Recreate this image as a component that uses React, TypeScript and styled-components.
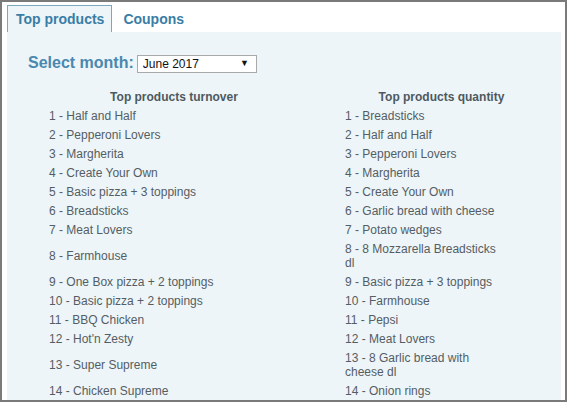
import styled, { createGlobalStyle } from "styled-components";

const GlobalStyle = createGlobalStyle`
  html, body {
    margin: 0;
    padding: 0;
    background: #ffffff;
  }
  body {
    font-family: "Liberation Sans", Arial, sans-serif;
  }
`;

const Frame = styled.div`
  width: 567px;
  height: 402px;
  box-sizing: border-box;
  border: 2px solid #7a7a7a;
  background: #ffffff;
  padding: 3px 4px 0 5px;
  display: flex;
  flex-direction: column;
  overflow: hidden;
`;

const TabBar = styled.div`
  display: flex;
  align-items: flex-end;
`;

const Tab = styled.div<{ $active?: boolean }>`
  height: 27px;
  box-sizing: border-box;
  padding: 0 7px 0 8px;
  display: flex;
  align-items: center;
  font-size: 14px;
  font-weight: bold;
  color: #3a7da6;
  background: ${(p) => (p.$active ? "#edf5f8" : "transparent")};
  border: 1px solid ${(p) => (p.$active ? "#7ba7bf" : "transparent")};
  border-bottom: none;
  margin-right: 2px;
`;

const Panel = styled.div`
  flex: 1;
  background: #edf5f8;
  padding: 22px 0 0 21px;
`;

const MonthRow = styled.div`
  display: flex;
  align-items: center;
  gap: 3px;
  height: 18px;
`;

const MonthLabel = styled.label`
  font-size: 16px;
  font-weight: bold;
  color: #4a88af;
  line-height: 18px;
`;

const SelectWrap = styled.div`
  position: relative;
  width: 120px;
  height: 18px;
`;

const MonthSelect = styled.select`
  appearance: none;
  width: 100%;
  height: 100%;
  box-sizing: border-box;
  border: 1px solid #a9a9a9;
  border-radius: 0;
  background: #ffffff;
  padding: 0 0 0 5px;
  font-family: "Liberation Sans", Arial, sans-serif;
  font-size: 12px;
  color: #111111;
  outline: none;
`;

const Arrow = styled.span`
  position: absolute;
  right: 8px;
  top: 4px;
  font-size: 9px;
  line-height: 10px;
  color: #111111;
  pointer-events: none;
`;

const Ranking = styled.div`
  display: grid;
  grid-template-columns: 296px 1fr;
  align-items: center;
  margin: 15px 0 0 -2px;
`;

const Heading = styled.div`
  text-align: center;
  font-size: 12px;
  font-weight: bold;
  color: #4d5960;
  line-height: 14px;
  padding: 2.5px 0;
`;

const Item = styled.div<{ $wrap?: number }>`
  padding: 2.5px 0 2.5px 23px;
  font-size: 12px;
  line-height: 14px;
  color: #555d64;
  span {
    display: block;
    max-width: ${(p) => (p.$wrap ? `${p.$wrap}px` : "none")};
  }
`;

const turnover = [
  "Half and Half",
  "Pepperoni Lovers",
  "Margherita",
  "Create Your Own",
  "Basic pizza + 3 toppings",
  "Breadsticks",
  "Meat Lovers",
  "Farmhouse",
  "One Box pizza + 2 toppings",
  "Basic pizza + 2 toppings",
  "BBQ Chicken",
  "Hot'n Zesty",
  "Super Supreme",
  "Chicken Supreme",
];

const quantity = [
  "Breadsticks",
  "Half and Half",
  "Pepperoni Lovers",
  "Margherita",
  "Create Your Own",
  "Garlic bread with cheese",
  "Potato wedges",
  "8 Mozzarella Breadsticks dl",
  "Basic pizza + 3 toppings",
  "Farmhouse",
  "Pepsi",
  "Meat Lovers",
  "8 Garlic bread with cheese dl",
  "Onion rings",
];

export default function App() {
  return (
    <>
      <GlobalStyle />
      <Frame>
        <TabBar>
          <Tab $active>Top products</Tab>
          <Tab>Coupons</Tab>
        </TabBar>
        <Panel>
          <MonthRow>
            <MonthLabel htmlFor="month">Select month:</MonthLabel>
            <SelectWrap>
              <MonthSelect id="month" defaultValue="2017-06">
                <option value="2017-06">June 2017</option>
                <option value="2017-05">May 2017</option>
              </MonthSelect>
              <Arrow>▼</Arrow>
            </SelectWrap>
          </MonthRow>
          <Ranking>
            <Heading>Top products turnover</Heading>
            <Heading>Top products quantity</Heading>
            {turnover.map((name, idx) => [
              <Item key={`t${idx}`}>
                <span>
                  {idx + 1} - {name}
                </span>
              </Item>,
              <Item key={`q${idx}`} $wrap={156}>
                <span>
                  {idx + 1} - {quantity[idx]}
                </span>
              </Item>,
            ])}
          </Ranking>
        </Panel>
      </Frame>
    </>
  );
}
